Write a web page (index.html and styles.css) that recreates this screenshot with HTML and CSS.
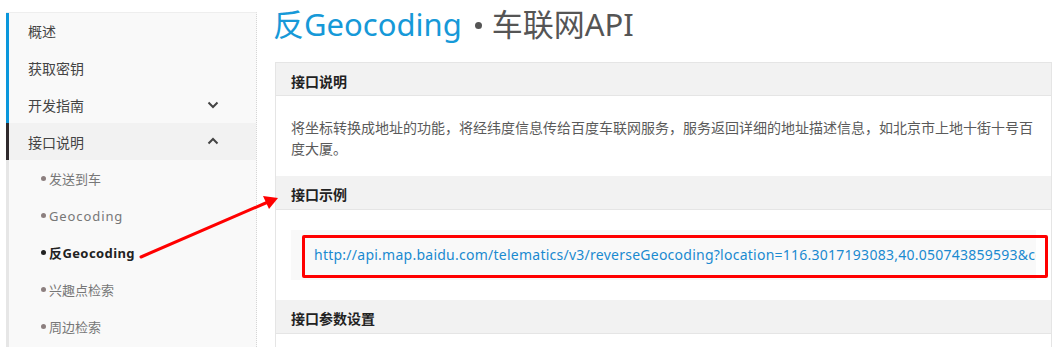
FILE: index.html
```html
<!DOCTYPE html>
<html lang="zh-CN">
<head>
<meta charset="utf-8">
<title>反Geocoding • 车联网API</title>
<link rel="stylesheet" href="styles.css">
</head>
<body>
<div class="page">
  <nav class="sidebar">
    <div class="nav-item bar-blue">概述</div>
    <div class="nav-item bar-blue">获取密钥</div>
    <div class="nav-item bar-blue has-chev">开发指南
      <svg class="chev" width="12" height="8" viewBox="0 0 12 8"><path d="M1.5 1.5 L6 6 L10.5 1.5" fill="none" stroke="#444" stroke-width="2"/></svg>
    </div>
    <div class="nav-item bar-dark open has-chev">接口说明
      <svg class="chev" width="12" height="8" viewBox="0 0 12 8"><path d="M1.5 6.5 L6 2 L10.5 6.5" fill="none" stroke="#444" stroke-width="2"/></svg>
    </div>
    <ul class="sub-list">
      <li class="sub-item">发送到车</li>
      <li class="sub-item latin">Geocoding</li>
      <li class="sub-item current">反Geocoding</li>
      <li class="sub-item">兴趣点检索</li>
      <li class="sub-item">周边检索</li>
    </ul>
  </nav>

  <main class="content">
    <h1 class="title"><span class="title-main">反Geocoding</span><span class="title-dot"></span><span class="title-sub">车联网API</span></h1>

    <section class="panel">
      <div class="panel-head">接口说明</div>
      <div class="panel-body">
        <p class="desc">将坐标转换成地址的功能，将经纬度信息传给百度车联网服务，服务返回详细的地址描述信息，如北京市上地十街十号百度大厦。</p>
      </div>
      <div class="panel-head">接口示例</div>
      <div class="panel-body example">
        <div class="code">http://api.map.baidu.com/telematics/v3/reverseGeocoding?location=116.3017193083,40.050743859593&amp;coord_type=gcj02&amp;ak=yourkey</div>
      </div>
      <div class="panel-head">接口参数设置</div>
      <div class="panel-body"></div>
    </section>
  </main>
</div>

<div class="mark-box"></div>
<svg class="mark-arrow" width="1055" height="347" viewBox="0 0 1055 347">
  <line x1="141" y1="257" x2="268" y2="202" stroke="#f00" stroke-width="3" stroke-linecap="round"/>
  <polygon points="278,198 263,196 269,209" fill="#f00"/>
</svg>
</body>
</html>
```

FILE: styles.css
```css
* { box-sizing: border-box; }

html, body {
  margin: 0;
  padding: 0;
  background: #fff;
  overflow: hidden;
}

body {
  width: 1055px;
  height: 347px;
  position: relative;
  font-family: "Noto Sans", "Noto Sans CJK SC", sans-serif;
  font-size: 14px;
  color: #333;
}

.page {
  display: flex;
  align-items: flex-start;
  padding-left: 6px;
}

/* ---------- sidebar ---------- */
.sidebar {
  width: 251px;
  margin-top: 12px;
  background: #f9f9f9;
  border-top: 1px solid #eeeeee;
  border-right: 1px dotted #d6d6d6;
  flex-shrink: 0;
}

.nav-item {
  height: 37px;
  display: flex;
  align-items: center;
  padding-left: 19px;
  padding-right: 36px;
  font-size: 14px;
  color: #444;
  border-left: 3px solid transparent;
  position: relative;
}

.nav-item:first-child { height: 36px; }

.bar-blue { border-left-color: #0a97dc; }
.bar-dark { border-left-color: #2f2a2d; }
.nav-item.open { background: #f2f2f2; }

.chev {
  position: absolute;
  right: 37px;
  top: 15px;
}
.open .chev { top: 14px; }

.sub-list {
  list-style: none;
  margin: 0;
  padding: 0 0 20px;
  border-left: 3px solid #e6e6e6;
}

.sub-item {
  height: 37px;
  display: flex;
  align-items: center;
  padding-left: 32px;
  font-size: 13px;
  color: #777;
  position: relative;
}

.sub-item::before {
  content: "";
  width: 5px;
  height: 5px;
  border-radius: 50%;
  background: #8c7f7f;
  margin-right: 3px;
  flex-shrink: 0;
}

.sub-item.latin { letter-spacing: 0.9px; }

.sub-item.current {
  color: #222;
  font-weight: bold;
  letter-spacing: 0.4px;
}
.sub-item.current::before { background: #222; }

/* ---------- content ---------- */
.content {
  margin-left: 18px;
  width: 777px;
  flex-shrink: 0;
}

.title {
  margin: 0 0 0 -2px;
  height: 48px;
  line-height: 48px;
  font-size: 31px;
  font-weight: normal;
  white-space: nowrap;
}

.title-main { color: #1699d8; }
.title-dot {
  display: inline-block;
  width: 7px;
  height: 7px;
  border-radius: 50%;
  background: #555;
  margin: 0 10px 0 13px;
  vertical-align: 7px;
}
.title-sub { color: #555; }

.panel {
  margin-top: 14px;
  border: 1px solid #e5e5e5;
  border-top: 0;
}

.panel-head {
  height: 34px;
  padding: 9px 15px 0;
  background: #f2f2f2;
  border-top: 1px solid #e5e5e5;
  border-bottom: 1px solid #e5e5e5;
  font-size: 14px;
  font-weight: bold;
  color: #222;
  line-height: 20px;
}

.panel-body {
  padding: 21px 15px 17px;
  background: #fff;
}

.panel-body + .panel-head { border-top: 0; }

.desc {
  margin: 0;
  font-size: 14px;
  line-height: 21px;
  color: #5a5a5a;
}

.example { padding: 20px 15px 20px; }

.code {
  height: 50px;
  line-height: 50px;
  padding-left: 23px;
  background: #f9f9f9;
  color: #1a8ad0;
  font-size: 14px;
  letter-spacing: 0.25px;
  white-space: nowrap;
  overflow: hidden;
}

/* ---------- annotations ---------- */
.mark-box {
  position: absolute;
  left: 302px;
  top: 235px;
  width: 746px;
  height: 43px;
  border: 3px solid #ff0000;
  border-radius: 2px;
}

.mark-arrow {
  position: absolute;
  left: 0;
  top: 0;
  pointer-events: none;
}
```
